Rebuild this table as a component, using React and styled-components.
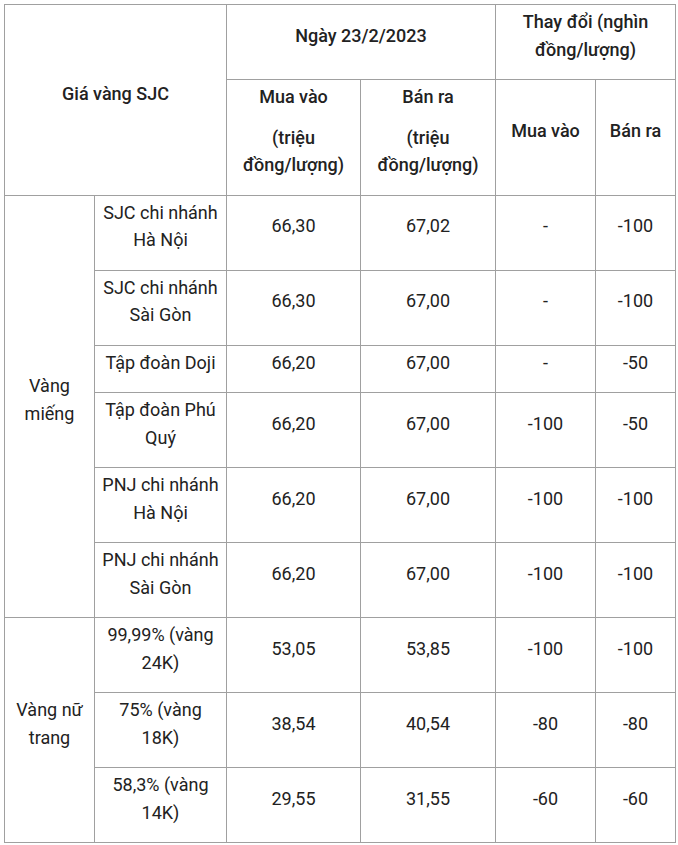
import React from "react";
import styled, { createGlobalStyle } from "styled-components";

const GlobalStyle = createGlobalStyle`
  html, body {
    margin: 0;
    padding: 0;
    background: #ffffff;
  }
  body {
    font-family: Roboto, "Noto Sans", Arial, sans-serif;
    color: #222222;
  }
`;

const Page = styled.div`
  padding: 4px 0 0 4px;
  width: 678px;
  box-sizing: border-box;
`;

const PriceTable = styled.table`
  border-collapse: collapse;
  table-layout: fixed;
  width: 671px;
  font-size: 18px;
  line-height: 27.5px;
`;

const Cell = styled.td`
  border: 1px solid #a0a0a0;
  padding: 3px 7px;
  text-align: center;
  vertical-align: middle;
  font-weight: ${(p) => (p.$head ? 500 : 400)};
  overflow-wrap: break-word;
`;

const Para = styled.p`
  margin: 0 0 13px;
`;

const Caption = styled.p`
  margin: 5px 0 0;
  padding: 0 10px;
  font-size: 18px;
  line-height: 27.5px;
  text-align: center;
`;

const widths = [90, 132, 134, 135, 100, 80];

const mieng = [
  ["SJC chi nhánh Hà Nội", "66,30", "67,02", "-", "-100"],
  ["SJC chi nhánh Sài Gòn", "66,30", "67,00", "-", "-100"],
  ["Tập đoàn Doji", "66,20", "67,00", "-", "-50"],
  ["Tập đoàn Phú Quý", "66,20", "67,00", "-100", "-50"],
  ["PNJ chi nhánh Hà Nội", "66,20", "67,00", "-100", "-100"],
  ["PNJ chi nhánh Sài Gòn", "66,20", "67,00", "-100", "-100"],
];

const nuTrang = [
  ["99,99% (vàng 24K)", "53,05", "53,85", "-100", "-100"],
  ["75% (vàng 18K)", "38,54", "40,54", "-80", "-80"],
  ["58,3% (vàng 14K)", "29,55", "31,55", "-60", "-60"],
];

const Group = ({ label, rows }) =>
  rows.map((row, i) => (
    <tr key={row[0]}>
      {i === 0 && (
        <Cell rowSpan={rows.length}>
          <Para>{label}</Para>
        </Cell>
      )}
      {row.map((v, j) => (
        <Cell key={j}>
          <Para>{v}</Para>
        </Cell>
      ))}
    </tr>
  ));

export default function App() {
  return (
    <Page>
      <GlobalStyle />
      <PriceTable>
        <colgroup>
          {widths.map((w, i) => (
            <col key={i} style={{ width: w }} />
          ))}
        </colgroup>
        <tbody>
          <tr>
            <Cell $head colSpan={2} rowSpan={2}>
              <Para>Giá vàng SJC</Para>
            </Cell>
            <Cell $head colSpan={2}>
              <Para>Ngày 23/2/2023</Para>
            </Cell>
            <Cell $head colSpan={2}>
              <Para>Thay đổi (nghìn đồng/lượng)</Para>
            </Cell>
          </tr>
          <tr>
            <Cell $head>
              <Para>Mua vào</Para>
              <Para>(triệu đồng/lượng)</Para>
            </Cell>
            <Cell $head>
              <Para>Bán ra</Para>
              <Para>(triệu đồng/lượng)</Para>
            </Cell>
            <Cell $head>
              <Para>Mua vào</Para>
            </Cell>
            <Cell $head>
              <Para>Bán ra</Para>
            </Cell>
          </tr>
          <Group label="Vàng miếng" rows={mieng} />
          <Group label="Vàng nữ trang" rows={nuTrang} />
        </tbody>
      </PriceTable>
      <Caption>Bảng giá vàng SJC cập nhật ngày 23/2/2023 theo từng thương hiệu.</Caption>
    </Page>
  );
}
